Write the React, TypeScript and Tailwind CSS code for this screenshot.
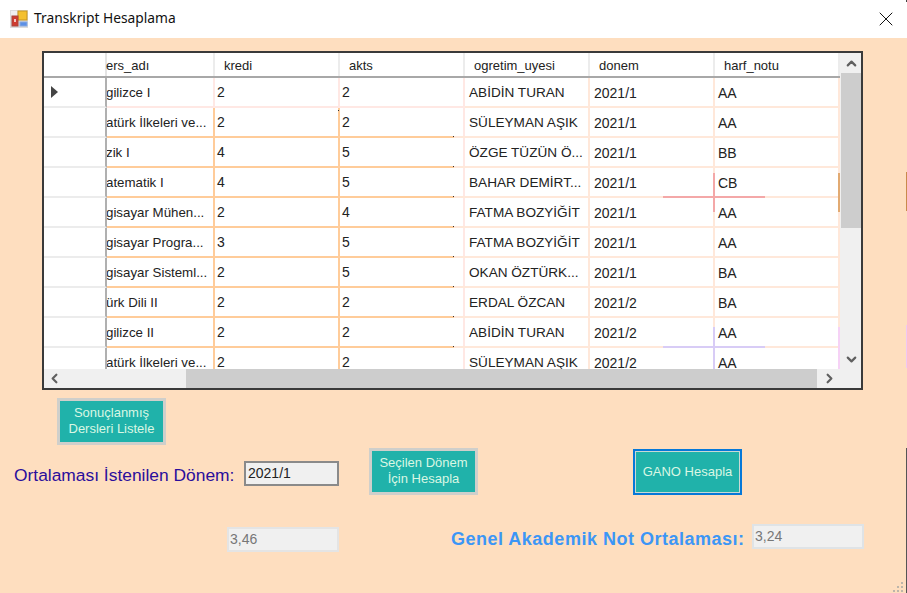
import { ChevronUp, ChevronDown, ChevronLeft, ChevronRight, X } from "lucide-react";

const rows = [
  ["gilizce I", "2", "2", "ABİDİN TURAN", "2021/1", "AA"],
  ["atürk İlkeleri ve...", "2", "2", "SÜLEYMAN AŞIK", "2021/1", "AA"],
  ["zik I", "4", "5", "ÖZGE TÜZÜN Ö...", "2021/1", "BB"],
  ["atematik I", "4", "5", "BAHAR DEMİRT...", "2021/1", "CB"],
  ["gisayar Mühen...", "2", "4", "FATMA BOZYİĞİT", "2021/1", "AA"],
  ["gisayar Progra...", "3", "5", "FATMA BOZYİĞİT", "2021/1", "AA"],
  ["gisayar Sisteml...", "2", "5", "OKAN ÖZTÜRK...", "2021/1", "BA"],
  ["ürk Dili II", "2", "2", "ERDAL ÖZCAN", "2021/2", "BA"],
  ["gilizce II", "2", "2", "ABİDİN TURAN", "2021/2", "AA"],
  ["atürk İlkeleri ve...", "2", "2", "SÜLEYMAN AŞIK", "2021/2", "AA"],
];
const headers = ["kredi", "akts", "ogretim_uyesi", "donem", "harf_notu"];
const cols = "grid grid-cols-[63px_108px_125px_125px_125px_125px_125px]";

function TealButton({ children, focus }: { children: React.ReactNode; focus?: boolean }) {
  return (
    <div className={focus ? "w-[109px] h-[46px] border-2 border-[#0678d8] bg-[#c9d9d5] p-px" : "w-[109px] h-[47px] border-[3px] border-[#cfcfcb] p-0"}>
      <div className="h-full flex items-center justify-center text-center bg-[#20b2aa] text-[#d9f7e4] text-[13px] leading-[16px] pb-px">{children}</div>
    </div>
  );
}

export default function App() {
  return (
    <div className="w-[907px] h-[593px] flex flex-col overflow-hidden relative bg-[#fedebf] font-['Liberation_Sans',sans-serif]">
      <div className="h-[38px] bg-white flex items-center shrink-0 relative">
        <svg width="18" height="18" viewBox="0 0 18 18" className="ml-[10px] mb-px">
          <rect x="0" y="0" width="18" height="18" fill="#dcdcdc" />
          <rect x="1" y="1" width="6" height="5" fill="#f0f0f0" />
          <rect x="8" y="1" width="9" height="9" fill="#f4c02e" stroke="#c8951e" />
          <rect x="2" y="6" width="6" height="10" fill="#cf3b30" stroke="#a8463c" />
          <rect x="4" y="9" width="2" height="3" fill="#f2c8c0" />
          <rect x="10" y="12" width="7" height="4" fill="#5c90e6" stroke="#86a8e0" />
        </svg>
        <span className="ml-[6px] mb-[2px] text-[13.8px] text-[#111] font-['Noto_Sans',sans-serif]">Transkript Hesaplama</span>
        <X className="absolute left-[874px] top-[7px] text-[#111]" size={24} strokeWidth={1} />
      </div>

      <div className="ml-[42px] mt-[13px] w-[821px] h-[339px] shrink-0 border-2 border-[#3a3a3a] bg-white flex flex-col text-[14px] text-[#222]">
        <div className="flex h-[316px] shrink-0">
          <div className="w-[796px] overflow-hidden relative">
            <div className={`${cols} h-[25px] border-b-2 border-[#a8a8a8] text-[13px]`}>
              <div className="border-r-2 border-[#e4e4e4]" />
              <div className="flex items-center pt-[2px] -ml-px border-r-2 border-[#ececec]">ers_adı</div>
              {headers.map((h) => (
                <div key={h} className="flex items-center pt-[2px] pl-[9px] border-r-2 border-[#ececec]">{h}</div>
              ))}
            </div>
            {rows.map((r, i) => (
              <div key={i} className={`${cols} h-[30px]`}>
                <div className="flex items-center border-r-2 border-b-2 border-r-[#b0b0b0] border-b-[#ececec] pl-[6px]">
                  {i === 0 && (
                    <svg width="9" height="12" viewBox="0 0 9 12"><path d="M1 0 L8 6 L1 12 Z" fill="#444" /></svg>
                  )}
                </div>
                <div className={`flex items-center pl-0 pt-px text-[13.3px] whitespace-nowrap overflow-hidden border-r-2 border-b-2 ${i === 0 ? "border-r-[#ffe8e4] border-b-[#ffe8e4]" : "border-r-[#ffcc9a] border-b-[#ffcc9a]"}`}>
                  <span className="-ml-px">{r[0]}</span>
                </div>
                <div className={`flex items-center pt-px pl-[2px] relative border-r-2 border-b-2 ${i === 0 ? "border-r-[#ffe8e4] border-b-[#ffe8e4]" : "border-r-[#ffcc9a] border-b-[#ffcc9a]"}`}>
                  {r[1]}
                  {i === 1 && <span className="absolute right-[-1px] top-[2px] w-px h-px bg-[#333]" />}
                </div>
                <div className={`flex items-center pt-px pl-[2px] relative border-r-2 border-b-2 border-r-[#ffe8e4] ${i === 0 ? "border-b-[#ffe8e4]" : "border-b-[#ffcc9a]"}`}>
                  {r[2]}
                  {i > 0 && (
                    <>
                      <span className="absolute right-[-2px] bottom-[-2px] w-[11px] h-[2px] bg-[#ffe8da]" />
                      <span className="absolute right-[9px] bottom-[-1px] w-px h-px bg-[#333]" />
                    </>
                  )}
                </div>
                <div className="flex items-center pt-[2px] pl-[4px] text-[13.6px] whitespace-nowrap border-r-2 border-b-2 border-[#ffe8da]">{r[3]}</div>
                <div className="flex items-center pt-[2px] pl-[4px] border-r-2 border-b-2 border-[#ffe8da]">{r[4]}</div>
                <div className="flex items-center pt-[2px] pl-[3px] border-r-2 border-b-2 border-[#ffe8da]">{r[5]}</div>
              </div>
            ))}
            <span className="absolute left-[619px] top-[143px] w-[102px] h-[2px] bg-[#f4a8a8]" />
            <span className="absolute left-[669px] top-[120px] w-[2px] h-[39px] bg-[#f4a8a8]" />
            <span className="absolute left-[794px] top-[120px] w-[2px] h-[39px] bg-[#e2aa72]" />
            <span className="absolute left-[619px] top-[293px] w-[102px] h-[2px] bg-[#d8ccf6]" />
            <span className="absolute left-[669px] top-[274px] w-[2px] h-[42px] bg-[#d8ccf6]" />
            <span className="absolute left-[794px] top-[274px] w-[2px] h-[42px] bg-[#f6d2f6]" />
          </div>
          <div className="flex-1 bg-[#f0f0f0] flex flex-col items-center pl-[1px]">
            <div className="h-[20px] flex items-center justify-center">
              <ChevronUp size={15} strokeWidth={3.5} className="text-[#606060]" />
            </div>
            <div className="w-full h-[155px] bg-[#cdcdcd]" />
            <div className="flex-1" />
            <div className="h-[20px] flex items-center justify-center">
              <ChevronDown size={15} strokeWidth={3.5} className="text-[#606060]" />
            </div>
          </div>
        </div>
        <div className="flex-1 flex items-center bg-[#f0f0f0]">
          <div className="w-[142px] pl-[3px] flex items-center">
            <ChevronLeft size={15} strokeWidth={3.5} className="text-[#606060]" />
          </div>
          <div className="w-[631px] h-full bg-[#cdcdcd]" />
          <div className="w-[24px] flex justify-center">
            <ChevronRight size={15} strokeWidth={3.5} className="text-[#606060]" />
          </div>
        </div>
      </div>

      <div className="ml-[57px] mt-[8px] shrink-0">
        <TealButton>
          <span>Sonuçlanmış<br />Dersleri Listele</span>
        </TealButton>
      </div>

      <div className="ml-[14px] mt-[3px] h-[47px] shrink-0 flex items-start">
        <span className="w-[230px] mt-[17px] text-[17.4px] leading-[20px] text-[#2a0e9c] whitespace-nowrap">Ortalaması İstenilen Dönem:</span>
        <div className="w-[95px] h-[25px] mt-[13px] border-2 border-[#8a8a8a] bg-[#f0f0f0] text-[14px] text-[#222] pl-[2px] flex items-center">2021/1</div>
        <div className="ml-[30px]">
          <TealButton>
            <span>Seçilen Dönem<br />İçin Hesapla</span>
          </TealButton>
        </div>
        <div className="ml-[155px] mt-px">
          <TealButton focus>GANO Hesapla</TealButton>
        </div>
      </div>

      <div className="ml-[227px] mt-[29px] shrink-0 flex items-start">
        <div className="w-[112px] h-[25px] mt-[3px] border-2 border-[#e4e4e4] bg-[#f0f0f0] text-[14px] text-[#777] pl-[1px] flex items-center">3,46</div>
        <span className="ml-[112px] mt-[5px] w-[301px] text-[18px] leading-[20px] tracking-[0.5px] font-bold text-[#3c96f6] whitespace-nowrap">Genel Akademik Not Ortalaması:</span>
        <div className="w-[112px] h-[25px] border-2 border-[#dfe3e6] bg-[#f0f0f0] text-[14px] text-[#777] pl-[1px] flex items-center">3,24</div>
      </div>

      <svg width="14" height="12" viewBox="0 0 14 12" className="absolute left-[892px] top-[581px]">
        <g fill="#bdb5aa">
          <rect x="9" y="1" width="2" height="2" />
          <rect x="5" y="5" width="2" height="2" />
          <rect x="9" y="5" width="2" height="2" />
          <rect x="1" y="9" width="2" height="2" />
          <rect x="5" y="9" width="2" height="2" />
          <rect x="9" y="9" width="2" height="2" />
        </g>
      </svg>

      <span className="absolute left-[906px] top-0 w-px h-[2px] bg-[#444]" />
      <span className="absolute left-[906px] top-[172px] w-px h-[39px] bg-[#c98a4c]" />
      <span className="absolute left-[906px] top-[325px] w-px h-[43px] bg-[#f0c8f4]" />
      <span className="absolute left-[906px] top-[448px] w-px h-[145px] bg-[#555]" />
    </div>
  );
}
